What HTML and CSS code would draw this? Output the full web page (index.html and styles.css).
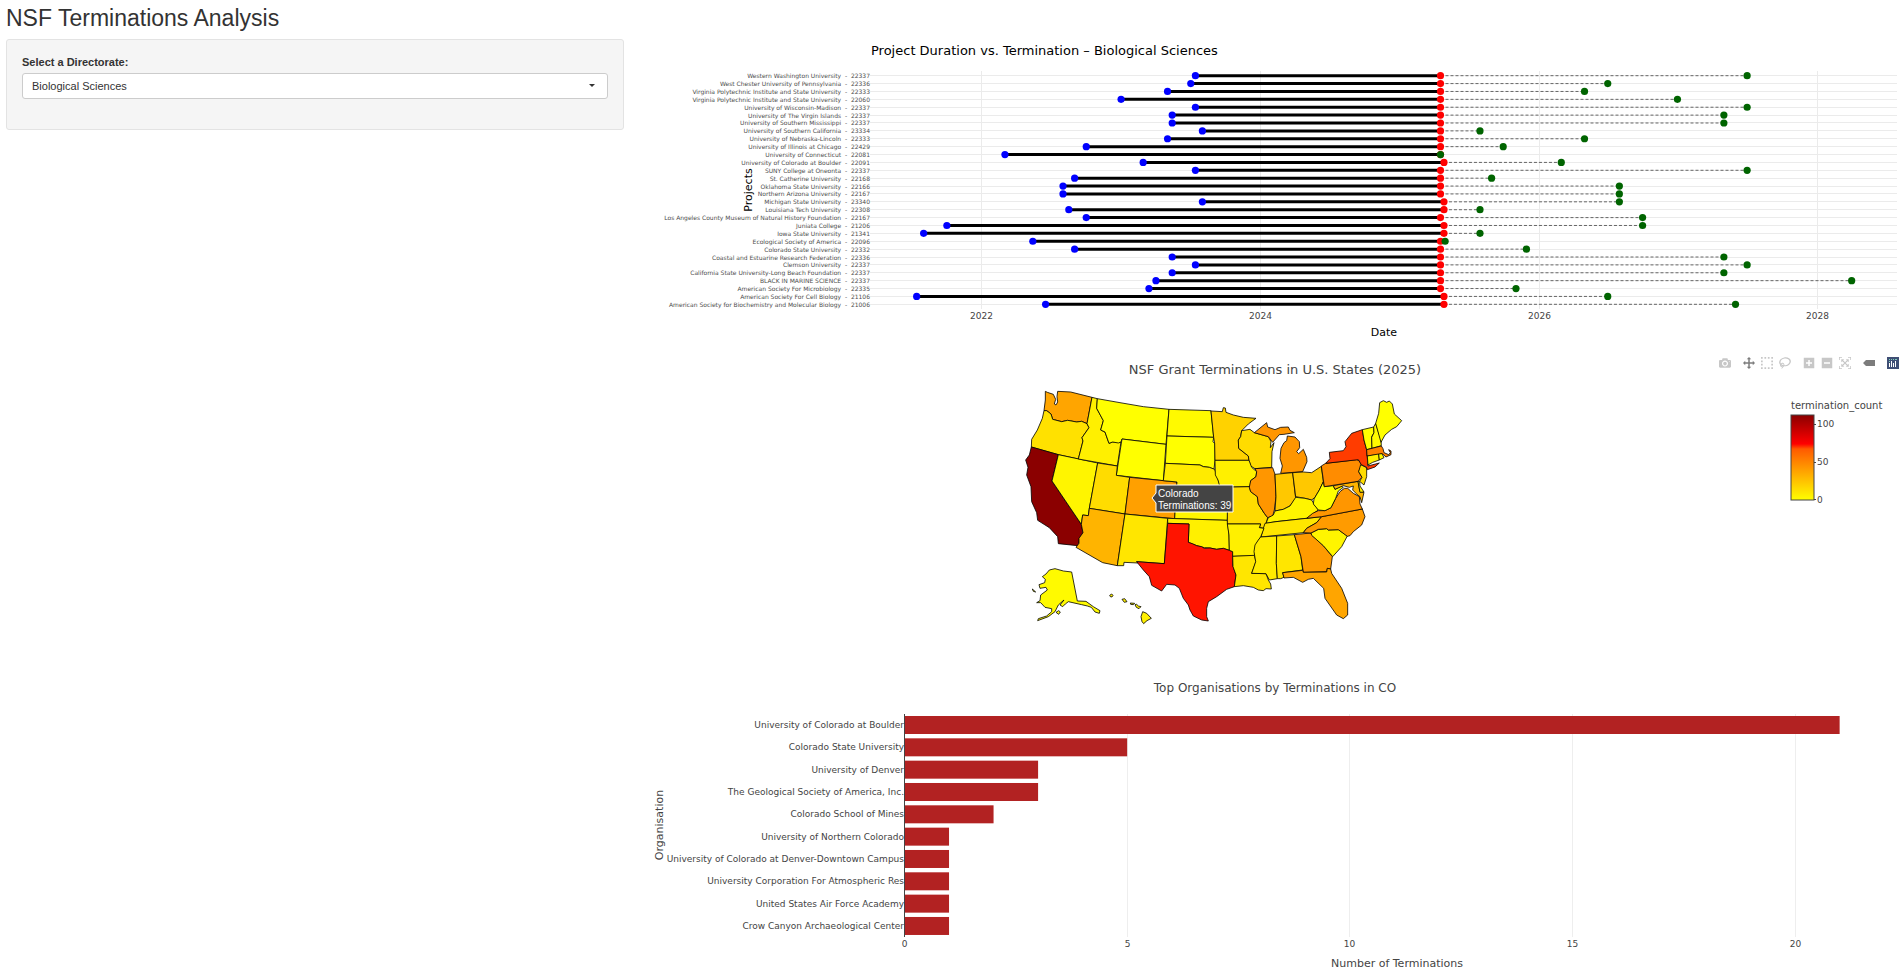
FILE: index.html
```html
<!DOCTYPE html>
<html lang="en">
<head>
<meta charset="utf-8">
<meta name="viewport" content="width=device-width, initial-scale=1">
<title>NSF Terminations Analysis</title>
<link rel="stylesheet" href="styles.css">
</head>
<body>
<header class="page-header"><h1 class="page-title">NSF Terminations Analysis</h1></header>
<div class="layout">
  <aside class="sidebar">
    <form class="well">
      <label class="field-label" for="directorate">Select a Directorate:</label>
      <div class="select-wrap">
        <select class="select" id="directorate"><option>Biological Sciences</option></select>
      </div>
    </form>
  </aside>
  <main class="charts">
    <section class="chart"><svg class="plot" id="duration" viewBox="0 0 1260 304" role="img" aria-label="Project Duration vs. Termination"></svg></section>

    <section class="chart">
      <svg class="plot" viewBox="0 0 1260 315" role="img" aria-label="NSF Grant Terminations in U.S. States">
        <defs>
          <linearGradient id="scale" x1="0" y1="1" x2="0" y2="0">
            <stop offset="0" stop-color="#ffff00"/><stop offset="0.33" stop-color="#ffa500"/><stop offset="0.6" stop-color="#ff5a00"/><stop offset="0.66" stop-color="#ff0000"/><stop offset="1" stop-color="#8b0000"/>
          </linearGradient>
        </defs>
        <text class="title-map" x="635" y="29">NSF Grant Terminations in U.S. States (2025)</text>
        <g class="states" transform="translate(370 40) scale(0.33333)">
          <path fill="#ffa500" d="M106,34L112,37 130,43 137,58 133,72 138,75 143,66 141,50 143,34 182,36 246,52 231,131 215,124 200,126 173,121 155,125 128,118 123,102 110,92 102,92 106,60Z"/>
          <path fill="#ffe100" d="M102,92L110,92 123,102 128,118 155,125 173,121 200,126 215,124 231,131 237,143 216,173 219,183 205,237 145,224 64,201 65,178 82,150 97,115Z"/>
          <path fill="#8b0000" d="M64,201L145,224 126,303 214,433 219,458 208,475 207,488 203,497 145,491 143,470 118,443 83,421 80,398 65,365 63,320 50,285 54,262 47,240 58,225Z"/>
          <path fill="#fff500" d="M145,224L263,249 238,385 235,407 218,405 214,433 126,303Z"/>
          <path fill="#fff000" d="M246,52L262,56 260,85 280,122 272,150 285,156 297,190 308,186 333,186 322,258 205,237 219,183 216,173 237,143 231,131Z"/>
          <path fill="#ffff00" d="M262,56L330,68 400,80 477,88 468,193 336,177 333,186 325,189 308,186 297,190 285,156 272,150 280,122 260,85Z"/>
          <path fill="#ffff00" d="M336,177L468,193 460,302 319,286Z"/>
          <path fill="#ffdc00" d="M263,249L322,258 319,286 359,292 345,402 238,385Z"/>
          <path fill="#ffa000" d="M359,292L501,306 494,416 345,402Z"/>
          <path fill="#ffb400" d="M238,385L345,402 322,557 278,548 198,502 207,490 207,475 219,458 214,433 218,405 235,407Z"/>
          <path fill="#ffe600" d="M345,402L473,415 463,551 380,545 384,549 342,547 341,557 322,557Z"/>
          <path fill="#fffa00" d="M477,88L603,92 611,172 471,168Z"/>
          <path fill="#ffff00" d="M471,168L611,172 609,185 615,192 615,241 612,268 598,262 580,260 570,255 466,250Z"/>
          <path fill="#ffeb00" d="M466,250L570,255 580,260 598,262 614,268 628,310 640,331 499,329 501,306 460,302Z"/>
          <path fill="#fff500" d="M499,329L640,331 655,345 652,421 494,416Z"/>
          <path fill="#fff000" d="M473,415L652,421 657,465 658,511 640,505 620,508 600,504 583,503 560,497 535,487 537,432 473,430Z"/>
          <path fill="#ff1400" d="M473,430L537,432 535,487 547,491 560,497 575,500 583,505 600,504 620,508 640,505 658,511 668,514 668,555 678,585 673,620 650,628 620,650 595,665 590,685 590,710 595,723 575,720 550,708 540,690 535,675 520,655 508,625 495,615 470,613 455,633 425,616 418,590 400,570 380,545 463,551Z"/>
          <path fill="#ffd200" d="M603,93L637,95 640,83 646,84 648,97 670,105 700,112 738,115 715,132 695,152 692,170 685,180 686,205 715,228 717,241 615,241 614,190 611,172Z"/>
          <path fill="#ffdc00" d="M695,152L720,148 733,158 775,170 783,185 781,203 792,188 786,215 785,262 735,266 722,258 717,241 715,228 686,205 685,180 692,170Z"/>
          <path fill="#ff9600" d="M733,158L770,128 773,141 795,149 812,142 835,141 840,151 853,158 822,163 808,164 788,187 785,183 775,170Z"/>
          <path fill="#ff9600" d="M832,168L855,171 868,185 869,203 860,215 866,221 880,208 890,232 891,245 878,275 812,280 817,258 810,235 813,205 822,188 830,182Z"/>
          <path fill="#fff000" d="M615,241L717,241 725,262 740,275 738,290 722,302 720,320 630,322 624,300 616,285Z"/>
          <path fill="#ffdc00" d="M630,322L718,320 722,335 742,350 745,372 763,400 773,413 768,432 762,445 748,443 752,432 652,432 652,345 640,331Z"/>
          <path fill="#ff9600" d="M735,266L788,263 795,283 798,350 793,390 788,408 773,413 763,400 745,372 742,350 722,335 718,322 722,302 738,290 740,275Z"/>
          <path fill="#ffc800" d="M795,283L848,278 857,355 840,378 820,388 795,393 798,350Z"/>
          <path fill="#ffc800" d="M848,278L880,276 905,278 934,259 940,305 928,330 915,352 905,360 885,355 857,350Z"/>
          <path fill="#fff500" d="M857,352L885,355 905,360 912,372 925,390 890,415 798,425 768,430 775,413 790,405 795,393 820,388 840,378Z"/>
          <path fill="#ffe600" d="M765,430L798,425 935,410 920,428 890,445 880,458 753,471 760,445Z"/>
          <path fill="#fff000" d="M652,432L752,432 748,443 762,445 752,471 740,490 733,527 668,529 668,515 658,511 657,465Z"/>
          <path fill="#ffe600" d="M668,529L733,526 738,545 725,580 768,581 775,600 782,612 784,627 768,626 760,632 745,630 730,622 700,617 673,620 678,585 669,560Z"/>
          <path fill="#ffeb00" d="M752,471L800,468 799,550 802,596 778,600 768,581 725,580 737,545 732,515 735,495 745,480Z"/>
          <path fill="#ffe600" d="M800,468L853,464 873,530 878,570 818,578 822,592 812,596 802,596 799,550Z"/>
          <path fill="#ff9b00" d="M853,464L903,459 905,465 940,497 967,530 962,567 952,565 950,575 880,577 873,530Z"/>
          <path fill="#fff500" d="M903,459L925,448 950,446 955,450 985,449 1012,468 995,500 968,530 940,497 905,466Z"/>
          <path fill="#ff9b00" d="M935,410L1057,387 1065,410 1055,435 1030,455 1020,467 1012,469 985,449 955,450 950,446 925,448 903,459 880,458 890,445 920,428Z"/>
          <path fill="#ffa500" d="M818,578L878,571 880,577 950,576 952,565 962,567 965,580 995,625 1013,670 1013,705 1000,716 980,705 945,655 941,625 910,595 895,598 878,607 850,592 822,594Z"/>
          <path fill="#ff9600" d="M890,415L908,400 925,392 945,392 963,383 977,355 990,335 1003,325 1013,325 1030,340 1048,350 1050,372 1057,387 935,410Z"/>
          <path fill="#ffff00" d="M940,305L943,320 970,317 975,328 993,319 1000,322 985,333 977,355 963,383 945,392 925,390 910,372 912,357 928,330Z"/>
          <path fill="#ffb400" d="M970,317L1044,304 1050,335 1062,337 1055,368 1050,350 1043,345 1028,330 1030,318 1018,322 1000,317 975,328Z"/>
          <path fill="#fff000" d="M1044,304L1049,304 1050,318 1062,336 1050,337Z"/>
          <path fill="#ff8c00" d="M934,258L947,250 1040,239 1048,243 1055,254 1046,275 1056,292 1044,304 943,320Z"/>
          <path fill="#ffdc00" d="M1052,254L1070,263 1070,290 1062,315 1049,304 1056,292 1046,275Z"/>
          <path fill="#ff3c00" d="M958,217L1000,212 1008,200 1005,185 1025,160 1057,149 1062,180 1070,210 1074,258 1108,249 1095,261 1072,269 1070,262 1054,254 1045,239 947,250 960,236Z"/>
          <path fill="#ffff00" d="M1057,149L1091,141 1092,158 1085,170 1086,205 1070,209 1062,180Z"/>
          <path fill="#fffa00" d="M1091,141L1097,130 1113,180 1114,197 1086,205 1085,172 1092,158Z"/>
          <path fill="#ffff00" d="M1097,130L1106,100 1109,68 1120,62 1130,67 1138,63 1147,72 1153,102 1175,122 1160,140 1145,148 1125,165 1113,187Z"/>
          <path fill="#ff8000" d="M1070,209L1114,198 1119,206 1122,218 1136,224 1141,218 1136,209 1143,213 1143,224 1128,231 1118,222 1071,228Z"/>
          <path fill="#fff000" d="M1072,228L1106,222 1108,240 1088,247 1074,255Z"/>
          <path fill="#ffff00" d="M1106,222L1116,221 1122,233 1108,240Z"/>
          <path fill="#fffa00" d="M135,566L160,573 185,576 202,663 228,664 250,680 270,692 268,700 255,696 244,682 232,678 215,674 175,665 166,672 158,680 150,675 162,660 145,675 135,695 115,710 83,722 85,716 110,708 125,695 125,686 105,682 92,668 80,668 90,662 92,645 112,630 108,622 90,625 87,614 104,608 106,598 97,590 108,582 118,570ZM67,627L77,636 70,634ZM138,697l8,-5 5,4 -5,7z"/>
          <path fill="#fff000" d="M299,646l6,-4 4,4 -3,5 -5,-1zM336,658l8,-2 7,9 -8,2zM361,669l13,1 -4,4 -8,-1zM375,674l5,-1 5,5 8,2 -6,6 -8,-4zM398,695l12,5 14,15 -13,7 -10,9 -5,-6 -3,-15z"/>
        </g>
        <rect class="legend-bar" x="1151" y="75" width="23" height="85" fill="url(#scale)"/>
        <text class="legend-title" x="1151" y="65">termination_count</text>
        <path class="legend-tick" d="M1174,84.5h2M1174,122.5h2M1174,159.5h2"/>
        <g class="tick"><text x="1177" y="84">100</text><text x="1177" y="122">50</text><text x="1177" y="160">0</text></g>
        <path class="tip-box" d="M512,158l4,-5v-8h77v27h-77v-9z"/>
        <g class="tip-text"><text x="518" y="153">Colorado</text><text x="518" y="165">Terminations: 39</text></g>
      </svg>
      <div class="modebar">
        <div class="modebar-group"><button class="mode-btn" type="button" aria-label="Download plot"><svg class="mode-icon" viewBox="0 0 1000 1000"><path transform="matrix(1 0 0 -1 0 850)" d="m500 450c-83 0-150-67-150-150 0-83 67-150 150-150 83 0 150 67 150 150 0 83-67 150-150 150z m400 150h-120c-16 0-34 13-39 29l-31 93c-6 15-23 28-40 28h-340c-16 0-34-13-39-28l-31-94c-6-15-23-28-40-28h-120c-55 0-100-45-100-100v-450c0-55 45-100 100-100h800c55 0 100 45 100 100v450c0 55-45 100-100 100z m-400-550c-138 0-250 112-250 250 0 138 112 250 250 250 138 0 250-112 250-250 0-138-112-250-250-250z m365 380c-19 0-35 16-35 35 0 19 16 35 35 35 19 0 35-16 35-35 0-19-16-35-35-35z"/></svg></button></div>
        <div class="modebar-group">
          <button class="mode-btn active" type="button" aria-label="Pan"><svg class="mode-icon" viewBox="0 0 1000 1000"><path transform="matrix(1 0 0 -1 0 850)" d="m1000 350l-187 188 0-125-250 0 0 250 125 0-188 187-187-187 125 0 0-250-250 0 0 125-188-188 186-187 0 125 252 0 0-250-125 0 187-188 188 188-125 0 0 250 250 0 0-126 187 188z"/></svg></button>
          <button class="mode-btn" type="button" aria-label="Box select"><svg class="mode-icon" viewBox="0 0 1000 1000"><path transform="matrix(1 0 0 -1 0 850)" d="m0 850l0-143 143 0 0 143-143 0z m286 0l0-143 143 0 0 143-143 0z m285 0l0-143 143 0 0 143-143 0z m286 0l0-143 143 0 0 143-143 0z m-857-286l0-143 143 0 0 143-143 0z m857 0l0-143 143 0 0 143-143 0z m-857-285l0-143 143 0 0 143-143 0z m857 0l0-143 143 0 0 143-143 0z m-857-286l0-143 143 0 0 143-143 0z m286 0l0-143 143 0 0 143-143 0z m285 0l0-143 143 0 0 143-143 0z m286 0l0-143 143 0 0 143-143 0z"/></svg></button>
          <button class="mode-btn" type="button" aria-label="Lasso select"><svg class="mode-icon" viewBox="0 0 1031 1000"><path transform="matrix(1 0 0 -1 0 850)" d="m1018 538c-36 207-290 336-568 286-277-48-473-256-436-463 10-57 36-108 76-151-13-66 11-137 68-183 34-28 75-41 114-42l-55-70 0 0c-2-1-3-2-4-3-10-14-8-34 5-45 14-11 34-8 45 4 1 1 2 3 2 5l0 0 113 140c16 11 31 24 45 40 4 3 6 7 8 11 48-3 100 0 151 9 278 48 473 255 436 462z m-624-379c-80 14-149 48-197 96 42 42 109 47 156 9 33-26 47-66 41-105z m-187-74c-19 16-33 37-39 60 50-32 109-55 174-68-42-25-95-24-135 8z m360 75c-34-7-69-9-102-8 8 62-16 128-68 170-73 59-175 54-244-5-9 20-16 40-20 61-28 159 121 317 333 354s407-60 434-217c28-159-121-318-333-355z"/></svg></button>
        </div>
        <div class="modebar-group">
          <button class="mode-btn" type="button" aria-label="Zoom in"><svg class="mode-icon" viewBox="0 0 875 1000"><path transform="matrix(1 0 0 -1 0 850)" d="m1 787l0-875 875 0 0 875-875 0z m687-500l-187 0 0-187-125 0 0 187-188 0 0 125 188 0 0 187 125 0 0-187 187 0 0-125z"/></svg></button>
          <button class="mode-btn" type="button" aria-label="Zoom out"><svg class="mode-icon" viewBox="0 0 875 1000"><path transform="matrix(1 0 0 -1 0 850)" d="m0 788l0-876 875 0 0 876-875 0z m688-500l-500 0 0 125 500 0 0-125z"/></svg></button>
          <button class="mode-btn" type="button" aria-label="Autoscale"><svg class="mode-icon" viewBox="0 0 1000 1000"><path transform="matrix(1 0 0 -1 0 850)" d="m250 850l-187 0-63 0 0-62 0-188 63 0 0 188 187 0 0 62z m688 0l-188 0 0-62 188 0 0-188 62 0 0 188 0 62-62 0z m-875-938l0 188-63 0 0-188 0-62 63 0 187 0 0 62-187 0z m875 188l0-188-188 0 0-62 188 0 62 0 0 62 0 188-62 0z m-125 188l-1 0-93-94-156 156 156 156 92-93 2 0 0 250-250 0 0-2 93-92-156-156-156 156 94 92 0 2-250 0 0-250 0 0 93 93 157-156-157-156-93 94 0 0 0-250 250 0 0 0-94 93 156 157 156-157-93-93 0 0 250 0 0 250z"/></svg></button>
        </div>
        <div class="modebar-group"><button class="mode-btn active" type="button" aria-label="Toggle hover"><svg class="mode-icon" viewBox="0 0 1500 1000"><path transform="matrix(1 0 0 -1 0 850)" d="m375 725l0 0-375-375 375-374 0-1 1125 0 0 750-1125 0z"/></svg></button></div>
        <div class="modebar-group"><button class="mode-btn brand" type="button" aria-label="Plotly"><svg class="mode-icon" viewBox="0 0 12 12"><path fill="#3f4f75" d="M0 0h12v12H0z"/><path fill="#80cfbe" d="M2 2h1v1H2zM4 2h1v1H4zM6 2h1v1H6zM8 2h2v1H8zM2 4h1v1H2z"/><path fill="#fff" d="M2 6h1v4H2zM4 4h1v6H4zM6 6h1v4H6zM8 4h1v6H8z"/></svg></button></div>
      </div>
    </section>

    <section class="chart"><svg class="plot" id="organisations" viewBox="0 0 1260 320" role="img" aria-label="Top Organisations by Terminations"></svg></section>
  </main>
</div>
<script src="charts.js"></script>
</body>
</html>
```
FILE: styles.css
```css
* { box-sizing: border-box; }
body {
  margin: 0;
  background: #fff;
  color: #333;
  font: 11px/16px "Liberation Sans", Arial, sans-serif;
}
.page-header { padding: 2px 6px; }
.page-title { margin: 0; font-size: 23px; line-height: 32px; font-weight: 400; }
.layout {
  display: grid;
  grid-template-columns: minmax(0, 618fr) minmax(0, 1260fr);
  gap: 16px;
  padding-left: 6px;
}
.sidebar { padding-top: 3px; }
.well {
  padding: 14px 15px 30px;
  background: #f5f5f5;
  border: 1px solid #e3e3e3;
  border-radius: 3px;
}
.field-label { display: block; margin-bottom: 3px; font-weight: 700; }
.select-wrap { position: relative; }
.select {
  display: block;
  width: 100%;
  height: 26px;
  padding: 0 24px 0 9px;
  appearance: none;
  background: #fff;
  border: 1px solid #ccc;
  border-radius: 3px;
  color: #333;
  font: inherit;
}
.select-wrap::after {
  content: "";
  position: absolute;
  right: 13px;
  top: 11px;
  border: 3px solid transparent;
  border-top-color: #333;
  border-bottom: 0;
  pointer-events: none;
}
.chart { position: relative; }
.plot {
  display: block;
  width: 100%;
  height: auto;
  font-family: "DejaVu Sans", Verdana, sans-serif;
  fill: #444;
}
.plot text { dominant-baseline: central; white-space: pre; }
.title-main { font-size: 13px; fill: #000; }
.title-map { font-size: 13px; text-anchor: middle; }
.title-bar { font-size: 12px; text-anchor: middle; }
.axis-title { font-size: 11px; text-anchor: middle; }
.axis-title.dark { fill: #000; }
.tick { font-size: 9px; fill: #444; }
.tick.middle { text-anchor: middle; }
.tick.end { text-anchor: end; }
.row-label { font-size: 6px; fill: #4d4d4d; text-anchor: end; }
.grid { stroke: #ebebeb; stroke-width: 1; fill: none; }
.grid.light { stroke: #eee; }
.zero { stroke: #444; stroke-width: 1; }
.active-span { stroke: #000; stroke-width: 3; }
.lost-span { stroke: #666; stroke-width: 1; stroke-dasharray: 3 2; }
.start { fill: #00f; }
.stop { fill: #f00; }
.planned { fill: #006400; }
.bar { fill: #b22222; }
.states path { stroke: #000; stroke-width: 3; stroke-opacity: 0.8; stroke-linejoin: round; }
.legend-bar { stroke: #444; stroke-width: 1; }
.legend-title { font-size: 10px; }
.legend-tick { stroke: #444; }
.tip-box { fill: #444; stroke: #fff; }
.tip-text { font: 10px "Liberation Sans", Arial, sans-serif; fill: #fff; }
.modebar {
  position: absolute;
  top: 17px;
  right: 1px;
  display: flex;
  gap: 12px;
}
.modebar-group { display: flex; gap: 6px; }
.mode-btn {
  width: 12px;
  height: 12px;
  padding: 0;
  border: 0;
  background: none;
  fill: #c7c7c7;
}
.mode-btn.active { fill: #7c7c7c; }
.mode-icon { display: block; width: 12px; height: 12px; }
```
FILE: charts.js
```js
const NS = "http://www.w3.org/2000/svg";

function add(parent, tag, attrs, text) {
  const el = document.createElementNS(NS, tag);
  for (const key in attrs) el.setAttribute(key, attrs[key]);
  if (text !== undefined) el.textContent = text;
  parent.appendChild(el);
  return el;
}

// [label, award id, start, termination, planned end], times in months since January 2022
const projects = [
  ["Western Washington University", "22337", 18.4, 39.5, 65.9],
  ["West Chester University of Pennsylvania", "22336", 18, 39.5, 53.9],
  ["Virginia Polytechnic Institute and State University", "22333", 16, 39.5, 51.9],
  ["Virginia Polytechnic Institute and State University", "22060", 12, 39.5, 59.9],
  ["University of Wisconsin-Madison", "22337", 18.4, 39.5, 65.9],
  ["University of The Virgin Islands", "22337", 16.4, 39.5, 63.9],
  ["University of Southern Mississippi", "22337", 16.4, 39.5, 63.9],
  ["University of Southern California", "23334", 19, 39.5, 42.9],
  ["University of Nebraska-Lincoln", "22333", 16, 39.5, 51.9],
  ["University of Illinois at Chicago", "22429", 9, 39.5, 44.9],
  ["University of Connecticut", "22081", 2, 39.5, 39.5],
  ["University of Colorado at Boulder", "22091", 13.9, 39.8, 49.9],
  ["SUNY College at Oneonta", "22337", 18.4, 39.5, 65.9],
  ["St. Catherine University", "22168", 8, 39.5, 43.9],
  ["Oklahoma State University", "22166", 7, 39.5, 54.9],
  ["Northern Arizona University", "22167", 7, 39.5, 54.9],
  ["Michigan State University", "23340", 19, 39.8, 54.9],
  ["Louisiana Tech University", "22308", 7.5, 39.8, 42.9],
  ["Los Angeles County Museum of Natural History Foundation", "22167", 9, 39.5, 56.9],
  ["Juniata College", "21206", -3, 39.8, 56.9],
  ["Iowa State University", "21341", -5, 39.8, 42.9],
  ["Ecological Society of America", "22096", 4.4, 39.5, 39.9],
  ["Colorado State University", "22332", 8, 39.5, 46.9],
  ["Coastal and Estuarine Research Federation", "22336", 16.4, 39.5, 63.9],
  ["Clemson University", "22337", 18.4, 39.5, 65.9],
  ["California State University-Long Beach Foundation", "22337", 16.4, 39.5, 63.9],
  ["BLACK IN MARINE SCIENCE", "22337", 15, 39.5, 74.9],
  ["American Society For Microbiology", "22335", 14.4, 39.5, 46],
  ["American Society For Cell Biology", "21106", -5.6, 39.8, 53.9],
  ["American Society for Biochemistry and Molecular Biology", "21006", 5.5, 39.8, 64.9]
];

function drawDuration(svg) {
  const x = m => 341.7 + m * 11.615;
  const y = i => 39.7 + i * 7.883;
  add(svg, "text", { class: "title-main", x: 231, y: 14 }, "Project Duration vs. Termination – Biological Sciences");
  [2022, 2024, 2026, 2028].forEach((year, i) => {
    const gx = Math.floor(x(i * 24)) + 0.5;
    add(svg, "path", { class: "grid", d: `M${gx},35V273` });
    add(svg, "text", { class: "tick middle", x: gx, y: 280 }, year);
  });
  projects.forEach((p, i) => {
    add(svg, "path", { class: "grid", d: `M230,${Math.floor(y(i)) + 0.5}H1257` });
    add(svg, "text", { class: "row-label", x: 230, y: y(i) }, `${p[0]}  -  ${p[1]}`);
  });
  projects.forEach((p, i) => {
    add(svg, "line", { class: "lost-span", x1: x(p[3]), x2: x(p[4]), y1: y(i), y2: y(i) });
    add(svg, "line", { class: "active-span", x1: x(p[2]), x2: x(p[3]), y1: y(i), y2: y(i) });
  });
  [["start", 2], ["stop", 3], ["planned", 4]].forEach(([name, k]) =>
    projects.forEach((p, i) => add(svg, "circle", { class: name, cx: x(p[k]), cy: y(i), r: 3.6 })));
  add(svg, "text", { class: "axis-title dark", x: 744, y: 296 }, "Date");
  add(svg, "text", { class: "axis-title dark", transform: "translate(108 154) rotate(-90)" }, "Projects");
}

const organisations = [
  ["University of Colorado at Boulder", 21],
  ["Colorado State University", 5],
  ["University of Denver", 3],
  ["The Geological Society of America, Inc.", 3],
  ["Colorado School of Mines", 2],
  ["University of Northern Colorado", 1],
  ["University of Colorado at Denver-Downtown Campus", 1],
  ["University Corporation For Atmospheric Res", 1],
  ["United States Air Force Academy", 1],
  ["Crow Canyon Archaeological Center", 1]
];

function drawOrganisations(svg) {
  const x = n => 264.5 + n * 44.53;
  const y = i => 70 + i * 22.33;
  add(svg, "text", { class: "title-bar", x: 635, y: 33 }, "Top Organisations by Terminations in CO");
  [0, 5, 10, 15, 20].forEach(n => {
    const gx = Math.floor(x(n)) + 0.5;
    if (n) add(svg, "path", { class: "grid light", d: `M${gx},59V282` });
    add(svg, "text", { class: "tick middle", x: gx, y: 289 }, n);
  });
  organisations.forEach(([name, count], i) => {
    add(svg, "rect", { class: "bar", x: x(0), y: y(i) - 9, width: x(count) - x(0), height: 18 });
    add(svg, "text", { class: "tick end", x: 264, y: y(i) }, name);
  });
  add(svg, "path", { class: "zero", d: "M264.5,59V282" });
  add(svg, "text", { class: "axis-title", x: 757, y: 308 }, "Number of Terminations");
  add(svg, "text", { class: "axis-title", transform: "translate(19 170) rotate(-90)" }, "Organisation");
}

drawDuration(document.getElementById("duration"));
drawOrganisations(document.getElementById("organisations"));
```
